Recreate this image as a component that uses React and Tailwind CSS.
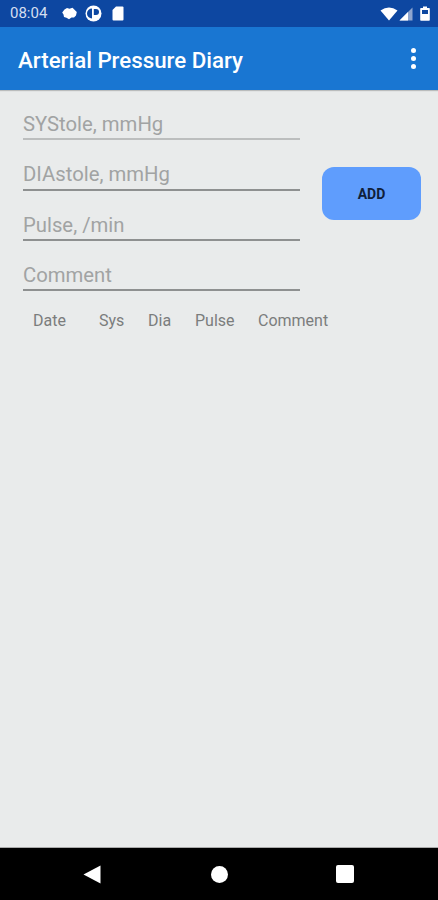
import React from 'react';

const fields = [
  { label: 'SYStole, mmHg', line: 'bg-[#bcbebe]' },
  { label: 'DIAstole, mmHg', line: 'bg-[#8e9090]' },
  { label: 'Pulse, /min', line: 'bg-[#8e9090]' },
  { label: 'Comment', line: 'bg-[#8e9090]' },
];

function StatusBar() {
  return (
    <div className="h-[27px] bg-[#0d47a1] flex items-center justify-between pl-[10px] pr-[8px] text-white">
      <div className="flex items-center">
        <span className="text-[15px] leading-none text-[#d5dff0] w-[39px]">08:04</span>
        <svg className="ml-[13px]" width="15" height="13" viewBox="0 0 15 13" fill="white">
          <path d="M2.5 2.5 L5 1 L7.5 1.8 L10.5 0.8 L12.5 2.8 L14.8 5 L14 8.5 L12 10.5 L9.5 10.5 L7 12.3 L4.5 10.8 L2 10 L1.5 7.5 L0.2 5.5Z" />
        </svg>
        <svg className="ml-[8px]" width="17" height="17" viewBox="0 0 17 17">
          <circle cx="8.5" cy="8.5" r="8" fill="white" />
          <path d="M7 3.5 A5 5 0 0 0 7 13.5Z" fill="#0d47a1" />
          <path d="M8.8 4 H11 A3 3 0 0 1 11 10 H8.8Z" fill="#0d47a1" />
        </svg>
        <svg className="ml-[10px]" width="12" height="15" viewBox="0 0 12 15" fill="white">
          <path d="M4 0.5 H10.5 A1 1 0 0 1 11.5 1.5 V13.5 A1 1 0 0 1 10.5 14.5 H1.5 A1 1 0 0 1 0.5 13.5 V4Z" />
        </svg>
      </div>
      <div className="flex items-center">
        <svg width="18" height="14" viewBox="0 0 18 14" fill="white">
          <path d="M0.5 3.5 Q9 -2.5 17.5 3.5 L9 13.5Z" />
        </svg>
        <svg className="ml-[1px]" width="14" height="14" viewBox="0 0 14 14">
          <path d="M13.5 0.5 V13.5 H0.5Z" fill="#8fa6cf" />
          <path d="M9 5 V13.5 H0.5 Z" fill="white" />
        </svg>
        <svg className="ml-[7px]" width="10" height="15" viewBox="0 0 10 15">
          <path d="M3 0.5 H7 V2 H9 A0.8 0.8 0 0 1 9.8 2.8 V14 A0.8 0.8 0 0 1 9 14.8 H1 A0.8 0.8 0 0 1 0.2 14 V2.8 A0.8 0.8 0 0 1 1 2 H3Z" fill="white" />
          <rect x="2" y="4" width="6" height="4" fill="#0d47a1" />
        </svg>
      </div>
    </div>
  );
}

function AppBar() {
  return (
    <div className="h-[63px] bg-[#1976d2] flex items-center justify-between pl-[18px] pr-[22px] shadow-[0_1px_1px_rgba(0,0,0,0.2)]">
      <h1 className="mt-[3px] text-[22.3px] font-medium text-white leading-none">Arterial Pressure Diary</h1>
      <div className="flex flex-col gap-[3px]">
        <span className="w-[5px] h-[5px] rounded-full bg-white" />
        <span className="w-[5px] h-[5px] rounded-full bg-white" />
        <span className="w-[5px] h-[5px] rounded-full bg-white" />
      </div>
    </div>
  );
}

export default function App() {
  return (
    <div className="w-[438px] h-[900px] flex flex-col bg-[#e9ebeb] font-['Roboto',sans-serif] overflow-hidden">
      <StatusBar />
      <AppBar />
      <div className="flex-1">
        <div className="flex">
          <div className="ml-[23px] w-[277px] flex flex-col">
            {fields.map((f) => (
              <div key={f.label} className="h-[50.3px] flex flex-col justify-end">
                <span className="text-[20.3px] leading-none text-[#a1a3a3] pb-[4px]">{f.label}</span>
                <div className={`h-[2px] ${f.line}`} />
              </div>
            ))}
          </div>
          <div className="ml-[22px] mt-[77px]">
            <button className="w-[99px] h-[53px] pt-[2px] rounded-[12px] bg-[#5f9dfd] text-[14px] font-bold text-[#10203a] flex items-center justify-center">
              ADD
            </button>
          </div>
        </div>
        <div className="h-[20px] mt-[20px] text-[16px] leading-[20px] text-[#7b7d7d]">
          <div className="flex">
            <span className="ml-[33px] w-[66px]">Date</span>
            <span className="w-[49px]">Sys</span>
            <span className="w-[47px]">Dia</span>
            <span className="w-[63px]">Pulse</span>
            <span>Comment</span>
          </div>
        </div>
      </div>
      <div className="h-[53px] bg-black border-t-[1px] border-[#aaa] flex items-center">
        <svg className="ml-[83px]" width="18" height="19" viewBox="0 0 18 19" fill="white">
          <path d="M17.5 0.5 V18.5 L0.5 9.5Z" />
        </svg>
        <span className="ml-[110px] w-[17px] h-[17px] rounded-full bg-white" />
        <span className="ml-[108px] w-[18px] h-[18px] rounded-[2px] bg-white" />
      </div>
    </div>
  );
}
